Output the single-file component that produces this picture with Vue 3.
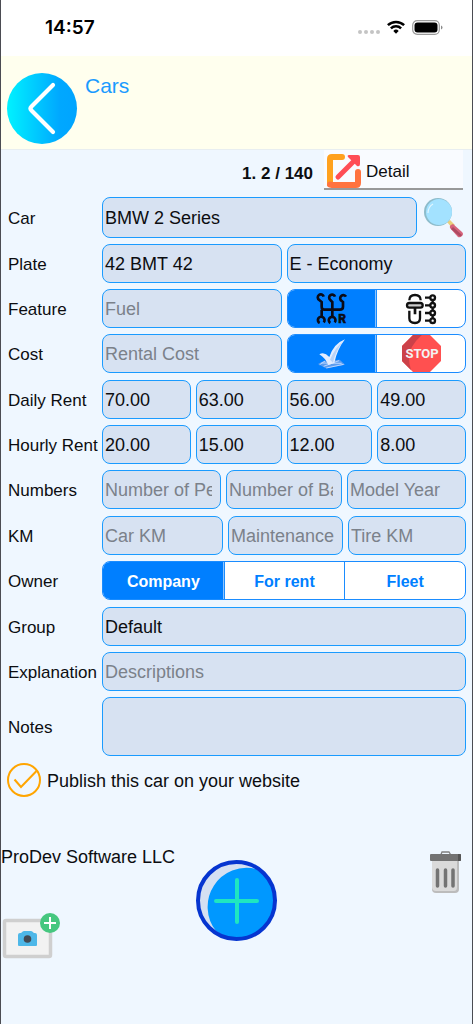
<script setup>
import { reactive } from 'vue'

const car = reactive({
  name: 'BMW 2 Series',
  plate: '42 BMT 42',
  segment: 'E - Economy',
  fuel: '',
  gearbox: 'manual',
  cost: '',
  costPaid: 'yes',
  owner: 'Company',
  group: 'Default',
  description: '',
  notes: '',
  publish: true,
})

const rents = reactive([
  { label: 'Daily Rent', id: 'daily', values: ['70.00', '63.00', '56.00', '49.00'] },
  { label: 'Hourly Rent', id: 'hourly', values: ['20.00', '15.00', '12.00', '8.00'] },
])

const numbers = ['Number of Person', 'Number of Baggage', 'Model Year']
const distances = ['Car KM', 'Maintenance KM', 'Tire KM']
const owners = ['Company', 'For rent', 'Fleet']
</script>

<template>
  <div class="page">
    <div class="status">
      <span class="time">14:57</span>
      <span class="signals">
        <svg width="22" height="4" viewBox="0 0 22 4" fill="#c4c4c4">
          <circle cx="2" cy="2" r="2" /><circle cx="8" cy="2" r="2" />
          <circle cx="14" cy="2" r="2" /><circle cx="20" cy="2" r="2" />
        </svg>
        <svg class="wifi" width="18" height="14" viewBox="0 0 18 14" fill="none" stroke="#000" stroke-width="2.5">
          <path d="M.9 5.2a11.6 11.6 0 0 1 16.2 0" />
          <path d="M3.9 8.3a7.3 7.3 0 0 1 10.2 0" />
          <path d="M9 13.7l-2.7-2.8a3.9 3.9 0 0 1 5.4 0z" fill="#000" stroke="none" />
        </svg>
        <svg width="31" height="15" viewBox="0 0 31 15">
          <rect x=".7" y=".7" width="26.6" height="13.6" rx="4.5" fill="none" stroke="#9b9b9b" stroke-width="1.2" />
          <rect x="2.5" y="2.5" width="23" height="10" rx="3" />
          <path d="M29 5.4q1.5.6 1.5 2.1T29 9.6z" fill="#8c8c8c" />
        </svg>
      </span>
    </div>

    <header class="header">
      <button class="bare" type="button" aria-label="Back">
        <svg width="70" height="71" viewBox="0 0 70 71">
          <defs>
            <linearGradient id="back-fill">
              <stop offset="0" stop-color="#00f2ff" />
              <stop offset=".75" stop-color="#00a8ff" />
              <stop offset="1" stop-color="#00a4ff" />
            </linearGradient>
          </defs>
          <ellipse cx="35" cy="35.5" rx="35" ry="35.5" fill="url(#back-fill)" />
          <path d="M46 12L24.500 33.500q-2 2 0 4L46 59" fill="none" stroke="#fff" stroke-width="4.200" stroke-linecap="round" />
        </svg>
      </button>
      <h1>Cars</h1>
    </header>

    <div class="toolbar">
      <strong>1. 2 / 140</strong>
      <button class="detail" type="button">
        <svg width="34" height="34" viewBox="0 0 34 34" fill="none">
          <path d="M15 3H5Q3 3 3 5V30" stroke="#ffa11e" stroke-width="6" stroke-linecap="round" />
          <path d="M3 30.500L5 31H29Q31 31 31 29V18" stroke="#ff733f" stroke-width="6" stroke-linecap="round" />
          <path d="M11 23L27 7" stroke="#ff4d55" stroke-width="5" stroke-linecap="round" />
          <path d="M21 3Q20 1 22 1H31Q33 1 33 3V10Q33 13 30 12z" fill="#ff4d55" />
        </svg>
        <span>Detail</span>
      </button>
    </div>

    <form class="form" @submit.prevent>
      <div class="group">
        <div class="row">
          <label for="car">Car</label>
          <div class="fields with-search">
            <input id="car" v-model="car.name" class="tall" type="text" />
            <button class="bare search" type="button" aria-label="Search car">
              <svg width="40" height="40" viewBox="0 0 40 40">
                <path d="M23 24l3-2 5 5-3 3z" fill="#e9cf7c" />
                <path d="M26 30q-1-3 3-4l9 8q2 2 0 4t-4 1z" fill="#d6647c" />
                <path d="M27 31l8 7q2 1 3-1l-9-8z" fill="#ad4a62" />
                <circle cx="14" cy="14" r="14" fill="#8dbccb" />
                <circle cx="15" cy="14" r="13" fill="#a3e2ff" />
                <path d="M4 15Q4 9 9 6" fill="none" stroke="#e0f6ff" stroke-width="1.200" />
              </svg>
            </button>
          </div>
        </div>

        <div class="row">
          <label for="plate">Plate</label>
          <div class="fields halves">
            <input id="plate" v-model="car.plate" type="text" />
            <select v-model="car.segment" aria-label="Segment">
              <option>E - Economy</option>
            </select>
          </div>
        </div>

        <div class="row">
          <label for="fuel">Feature</label>
          <div class="fields halves">
            <input id="fuel" v-model="car.fuel" type="text" placeholder="Fuel" />
            <div class="segments pair" role="radiogroup" aria-label="Gearbox">
              <label :class="{ on: car.gearbox === 'manual' }">
                <input v-model="car.gearbox" type="radio" name="gearbox" value="manual" aria-label="Manual" />
                <svg width="30" height="30" viewBox="0 0 90 90" fill="none" stroke="#0b0b16" stroke-width="8">
                  <path d="M20 8A9 9 0 1 0 7 18L14 24V38Q14 47 22 47H68Q78 47 78 38V24L71 18A9 9 0 1 1 87 8" />
                  <path d="M54 8A9 9 0 1 0 40 18L46 24V67" />
                  <path d="M14 47V66M8 87A10 10 0 1 1 20 85" />
                  <path d="M40 87A10 10 0 1 1 53 85" />
                  <text x="64" y="87" font-family="Roboto, sans-serif" font-weight="700" font-size="36" fill="#0b0b16" stroke="#0b0b16" stroke-width="2">R</text>
                </svg>
              </label>
              <label :class="{ on: car.gearbox === 'automatic' }">
                <input v-model="car.gearbox" type="radio" name="gearbox" value="automatic" aria-label="Automatic" />
                <svg width="30" height="30" viewBox="0 0 90 90" fill="none" stroke="#111" stroke-width="7">
                  <path d="M10 19Q10 3 27 3T44 19" />
                  <rect x="3" y="27" width="47" height="14" rx="7" fill="#ccc" />
                  <path d="M10 50V73Q10 87 27 87Q42 87 42 73V50" />
                  <path d="M27 41V61" stroke-width="8" />
                  <path d="M57 11H73M57 34H73M57 57H73M57 80H73M80 18V27M80 41V50M80 64V73" />
                  <circle cx="80" cy="11" r="7" /><circle cx="80" cy="34" r="7" />
                  <circle cx="80" cy="57" r="7" /><circle cx="80" cy="80" r="7" />
                </svg>
              </label>
            </div>
          </div>
        </div>

        <div class="row">
          <label for="cost">Cost</label>
          <div class="fields halves">
            <input id="cost" v-model="car.cost" type="text" placeholder="Rental Cost" />
            <div class="segments pair" role="radiogroup" aria-label="Cost status">
              <label :class="{ on: car.costPaid === 'yes' }">
                <input v-model="car.costPaid" type="radio" name="paid" value="yes" aria-label="Active" />
                <svg width="30" height="30" viewBox="0 0 90 90">
                  <path d="M3 75L20 66L68 62L84 77L27 88z" fill="#5c9cee" />
                  <path d="M8 77L24 66M20 82L66 65M13 72L74 73M28 87L80 76" stroke="#bad6ff" stroke-width="3" />
                  <path d="M7 46Q22 37 37 54Q50 14 84 1Q60 32 52 72L34 78Q24 56 7 46z" fill="#e3edff" />
                  <path d="M39 62Q54 27 76 9Q54 41 48 71z" fill="#b9d3f7" />
                </svg>
              </label>
              <label :class="{ on: car.costPaid === 'no' }">
                <input v-model="car.costPaid" type="radio" name="paid" value="no" aria-label="Stopped" />
                <svg width="39" height="39" viewBox="0 0 39 39">
                  <path d="M12 0H27L39 12V27L27 39H12L0 27V12z" fill="#ff5050" />
                  <path d="M12 0H21Q7 12 7 24Q7 30 9 36L0 27V12z" fill="#cc4149" />
                  <text x="20" y="24" text-anchor="middle" font-family="Roboto, sans-serif" font-weight="700" font-size="13" fill="#f3f3f3">STOP</text>
                </svg>
              </label>
            </div>
          </div>
        </div>
      </div>

      <div class="group">
        <div v-for="rent in rents" :key="rent.id" class="row">
          <label :for="rent.id + 0">{{ rent.label }}</label>
          <div class="fields quarters">
            <input
              v-for="(value, i) in rent.values"
              :id="rent.id + i"
              :key="i"
              v-model="rent.values[i]"
              type="text"
              inputmode="decimal"
              :aria-label="`${rent.label} ${i + 1}`"
            />
          </div>
        </div>
        <div class="row">
          <label for="number0">Numbers</label>
          <div class="fields thirds">
            <input v-for="(hint, i) in numbers" :id="'number' + i" :key="hint" type="text" :placeholder="hint" :aria-label="hint" />
          </div>
        </div>
      </div>

      <div class="group">
        <div class="row">
          <label for="km0">KM</label>
          <div class="fields distances">
            <input v-for="(hint, i) in distances" :id="'km' + i" :key="hint" type="text" :placeholder="hint" :aria-label="hint" />
          </div>
        </div>
        <div class="row">
          <span id="owner-label" class="name">Owner</span>
          <div class="segments" role="radiogroup" aria-labelledby="owner-label">
            <label v-for="owner in owners" :key="owner" :class="{ on: car.owner === owner }">
              <input v-model="car.owner" type="radio" name="owner" :value="owner" />
              {{ owner }}
            </label>
          </div>
        </div>
      </div>

      <div class="group">
        <div class="row">
          <label for="group">Group</label>
          <select id="group" v-model="car.group">
            <option>Default</option>
          </select>
        </div>
        <div class="row">
          <label for="description">Explanation</label>
          <input id="description" v-model="car.description" type="text" placeholder="Descriptions" />
        </div>
        <div class="row">
          <label for="notes">Notes</label>
          <textarea id="notes" v-model="car.notes"></textarea>
        </div>
      </div>

      <label class="publish">
        <input v-model="car.publish" type="checkbox" />
        <svg width="34" height="34" viewBox="0 0 34 34" fill="none" stroke="#ffa500" stroke-width="2">
          <circle cx="17" cy="17" r="16" />
          <path v-if="car.publish" d="M7.500 16.500L14 24L29.500 8" />
        </svg>
        <span>Publish this car on your website</span>
      </label>
    </form>

    <footer class="footer">
      <div class="company">
        <span>ProDev Software LLC</span>
        <button class="bare photo" type="button" aria-label="Add photo">
          <svg width="57" height="46" viewBox="0 0 57 46">
            <rect x="1.500" y="7.500" width="46" height="36" rx="1.500" fill="#f2f2f2" stroke="#cfcfcf" stroke-width="3.500" />
            <path d="M15 22q0-2 2-2h1q2-2 3-2h7q1 0 3 2h1q2 0 2 2v10q0 1-1 1H16q-1 0-1-1z" fill="#4db7e8" />
            <circle cx="24.500" cy="26" r="3.800" fill="#424a54" />
            <circle cx="47" cy="10" r="10" fill="#46c77f" />
            <path d="M47 4v12M41 10h12" stroke="#fff" stroke-width="2" />
          </svg>
        </button>
      </div>
      <button class="bare add" type="button" aria-label="Add car">
        <svg width="81" height="81" viewBox="0 0 81 81">
          <circle cx="40.500" cy="40.500" r="38.500" fill="#d5e0f2" />
          <path d="M60 9A39 39 0 0 0 20 71A37 37 0 1 0 60 9z" fill="#0098ff" />
          <circle cx="40.500" cy="40.500" r="38.500" fill="none" stroke="#0635d0" stroke-width="4" />
          <path d="M41 20V62M20 41H61" stroke="#1fe6c0" stroke-width="4" stroke-linecap="round" />
        </svg>
      </button>
      <button class="bare trash" type="button" aria-label="Delete">
        <svg width="31" height="42" viewBox="0 0 31 42">
          <path d="M2 9H29V38Q29 42 25 42H6Q2 42 2 38z" fill="#bcbcbc" />
          <path d="M2 9H27V36Q27 40 24 40H6Q2 40 2 36z" fill="#dadada" />
          <path d="M11 3.500L12 1H19L20.500 3.500" fill="none" stroke="#808080" stroke-width="1.300" />
          <rect y="3" width="31" height="7" rx="1" fill="#737373" />
          <path d="M28 3h2q1 0 1 1v5q0 1-1 1h-2z" fill="#555" />
          <path d="M7.500 19V35M15.500 19V35M23 19V35" stroke="#737373" stroke-width="3.500" stroke-linecap="round" />
        </svg>
      </button>
    </footer>
  </div>
</template>

<style>
body {
  margin: 0;
  background: #eff7ff;
}
</style>

<style scoped>
.page {
  box-sizing: border-box;
  min-height: 100vh;
  border: solid #4b4c52;
  border-width: 0 1px;
  background: #eff7ff;
  color: #0c0d10;
  font: 18px/22px "Liberation Sans", Arial, sans-serif;
}
svg {
  display: block;
  flex: none;
  overflow: visible;
}
button {
  cursor: pointer;
}
.bare {
  display: block;
  padding: 0;
  border: 0;
  background: none;
}

.status {
  display: flex;
  justify-content: space-between;
  align-items: center;
  box-sizing: border-box;
  height: 56px;
  padding: 0 29px 2px 44px;
  background: #fff;
}
.time {
  padding-top: 2px;
  color: #000;
  font: 600 19px/24px Inter, sans-serif;
}
.signals {
  display: flex;
  align-items: center;
  gap: 7px;
}
.signals svg:first-child {
  margin-top: 10px;
}

.header {
  display: flex;
  align-items: flex-start;
  gap: 8px;
  box-sizing: border-box;
  height: 94px;
  padding: 17px 6px 0;
  border-bottom: 1px solid #e8eef0;
  background: #ffffee;
}
h1 {
  margin: 0;
  color: #1a9bff;
  font-size: 21px;
  font-weight: 400;
  line-height: 26px;
}

.toolbar {
  display: flex;
  justify-content: flex-end;
  align-items: center;
  gap: 11px;
  padding-right: 9px;
}
.toolbar strong {
  padding-top: 8px;
  font-size: 17px;
}
.detail {
  display: flex;
  align-items: center;
  gap: 5px;
  width: 139px;
  height: 40px;
  padding: 3px 3px 0;
  border: 0;
  border-bottom: 2px solid #999;
  background: #f9fbff;
  color: #0c0d10;
  font: inherit;
  font-size: 17px;
}
.detail span,
.publish span {
  padding-top: 2px;
}

.form {
  display: flex;
  flex-direction: column;
  gap: 7px;
  padding: 7px 6px 0;
}
.group {
  display: flex;
  flex-direction: column;
  gap: 6px;
}
.row {
  display: grid;
  grid-template-columns: 95px minmax(0, 1fr);
  align-items: center;
}
.row > label,
.name {
  padding: 2px 0 0 1px;
  font-size: 17px;
  white-space: nowrap;
}
.fields {
  display: grid;
  align-items: center;
  gap: 5px;
}
.with-search {
  grid-template-columns: minmax(0, 1fr) 44px;
}
.search {
  justify-self: center;
}
.halves {
  grid-template-columns: repeat(2, minmax(0, 1fr));
}
.thirds {
  grid-template-columns: 119fr 116fr 119fr;
}
.distances {
  grid-template-columns: 121fr 115fr 118fr;
}
.quarters {
  grid-template-columns: 89fr 86fr 86fr 89fr;
}

.row input[type="text"],
.row select,
.row textarea {
  display: block;
  box-sizing: border-box;
  width: 100%;
  min-width: 0;
  height: 39px;
  margin: 0;
  padding: 2px 8px 0 2px;
  border: 1px solid #1a9bff;
  border-radius: 8px;
  outline: 0;
  background: #d7e2f2;
  color: #0c0d10;
  font: inherit;
  appearance: none;
}
.row select {
  padding: 0 8px 0 2px;
}
.row input.tall {
  height: 41px;
}
.row textarea {
  height: 59px;
  resize: none;
}
.row input::placeholder {
  color: #7b818a;
  opacity: 1;
}

.segments {
  display: grid;
  grid-template-columns: repeat(3, minmax(0, 1fr));
  box-sizing: border-box;
  height: 39px;
  overflow: hidden;
  border: 1px solid #1a8cff;
  border-radius: 8px;
  background: #fff;
  color: #007fff;
  font-size: 16px;
  font-weight: 700;
}
.pair {
  grid-template-columns: repeat(2, minmax(0, 1fr));
}
.segments label {
  position: relative;
  display: flex;
  justify-content: center;
  align-items: center;
  min-height: 0;
  padding-top: 2px;
  cursor: pointer;
}
.segments.pair label {
  padding-top: 0;
}
.segments label + label {
  border-left: 1px solid #1a8cff;
}
.segments .on {
  background: #007fff;
  color: #fff;
}
.segments .on + label {
  box-shadow: -1px 0 #8cc4ff;
}
.segments input {
  position: absolute;
  inset: 0;
  width: 100%;
  height: 100%;
  margin: 0;
  opacity: 0;
}

.publish {
  position: relative;
  display: flex;
  align-items: center;
  align-self: flex-start;
  gap: 6px;
}
.publish input {
  position: absolute;
  width: 34px;
  height: 34px;
  margin: 0;
  opacity: 0;
}

.footer {
  display: grid;
  grid-template-columns: 1fr auto 1fr;
  align-items: start;
  padding: 49px 11px 0 0;
}
.company {
  margin-right: -11px;
  white-space: nowrap;
}
.photo {
  margin: 45px 0 0 2px;
}
.add {
  margin: 14px 0 0 11px;
}
.trash {
  margin-top: 5px;
  justify-self: end;
}
</style>
